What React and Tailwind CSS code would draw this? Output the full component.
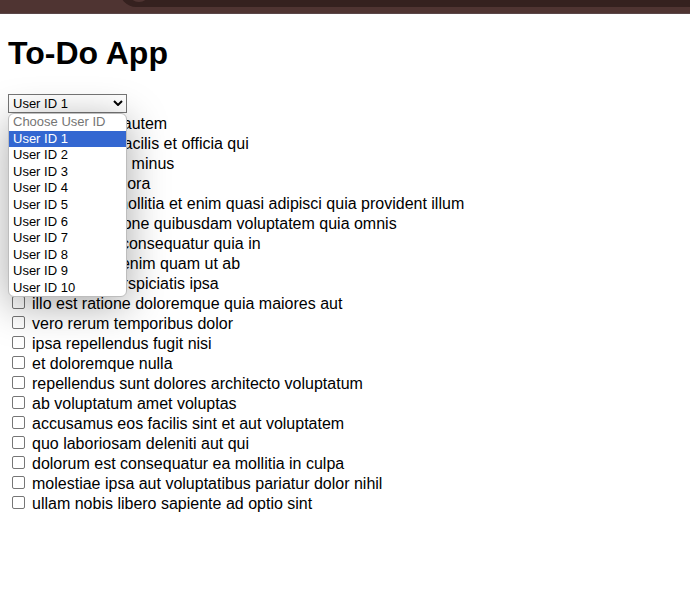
import { useState } from "react";

const users = [1, 2, 3, 4, 5, 6, 7, 8, 9, 10];

const todos = [
  "delectus aut autem",
  "quis ut nam facilis et officia qui",
  "fugiat veniam minus",
  "et porro tempora",
  "laboriosam mollitia et enim quasi adipisci quia provident illum",
  "qui ullam ratione quibusdam voluptatem quia omnis",
  "illo expedita consequatur quia in",
  "quo adipisci enim quam ut ab",
  "molestiae perspiciatis ipsa",
  "illo est ratione doloremque quia maiores aut",
  "vero rerum temporibus dolor",
  "ipsa repellendus fugit nisi",
  "et doloremque nulla",
  "repellendus sunt dolores architecto voluptatum",
  "ab voluptatum amet voluptas",
  "accusamus eos facilis sint et aut voluptatem",
  "quo laboriosam deleniti aut qui",
  "dolorum est consequatur ea mollitia in culpa",
  "molestiae ipsa aut voluptatibus pariatur dolor nihil",
  "ullam nobis libero sapiente ad optio sint",
];

function BrowserEdge() {
  return (
    <header className="flex h-[14px] items-end overflow-hidden border-b border-[#5a4648] bg-[#4f3432] pb-[6px]">
      <div className="ml-[120px] flex h-8 flex-1 items-end rounded-l-full bg-[#35211f] pb-[5px] pl-2">
        <span className="size-[22px] rounded-full bg-[#4f3432]" />
      </div>
    </header>
  );
}

function UserPicker({ user, onChange }) {
  return (
    <div className="relative h-[19px] w-[119px] text-[13px] leading-4">
      <select
        aria-label="User"
        value={user}
        onChange={(e) => onChange(Number(e.target.value))}
        className="block h-[19px] w-full appearance-none border border-[#767676] bg-white pl-1 leading-4"
      >
        <option value={0} disabled>
          Choose User ID
        </option>
        {users.map((id) => (
          <option key={id} value={id}>
            User ID {id}
          </option>
        ))}
      </select>
      <svg
        viewBox="0 0 10 6"
        className="pointer-events-none absolute right-1 top-[6px] h-[6px] w-[10px] fill-none stroke-black stroke-2"
      >
        <path d="M1 1l4 4 4-4" />
      </svg>
      <ul
        role="listbox"
        aria-label="User choices"
        className="absolute left-0 top-full z-10 flex h-[184px] w-full flex-col overflow-hidden rounded-md border border-[#bdbdbd] bg-white shadow-[0_8px_40px_rgba(0,0,0,0.35)]"
      >
        <li role="option" aria-selected={false} aria-disabled className="flex flex-1 items-center pl-1 text-[#757575]">
          Choose User ID
        </li>
        {users.map((id) => (
          <li
            key={id}
            role="option"
            aria-selected={id === user}
            onClick={() => onChange(id)}
            className={
              id === user
                ? "flex flex-1 items-center bg-[#3367d1] pl-1 text-white"
                : "flex flex-1 items-center pl-1"
            }
          >
            User ID {id}
          </li>
        ))}
      </ul>
    </div>
  );
}

export default function App() {
  const [user, setUser] = useState(1);
  return (
    <div className="min-h-screen bg-white font-['Liberation_Sans',Arial,sans-serif] text-base text-black">
      <BrowserEdge />
      <main className="px-2 pt-[21px]">
        <h1 className="mb-[22px] text-[32px] font-bold leading-[37px]">To-Do App</h1>
        <UserPicker user={user} onChange={setUser} />
        <ul className="pt-px">
          {todos.map((todo) => (
            <li key={todo} className="h-5">
              <label className="flex h-5 items-center gap-[7px] pl-1 leading-5">
                <input
                  type="checkbox"
                  className="mb-[3px] size-[13px] shrink-0 appearance-none rounded-[2px] border border-[#767676] bg-white checked:bg-[#0075ff]"
                />
                <span>{todo}</span>
              </label>
            </li>
          ))}
        </ul>
      </main>
    </div>
  );
}
